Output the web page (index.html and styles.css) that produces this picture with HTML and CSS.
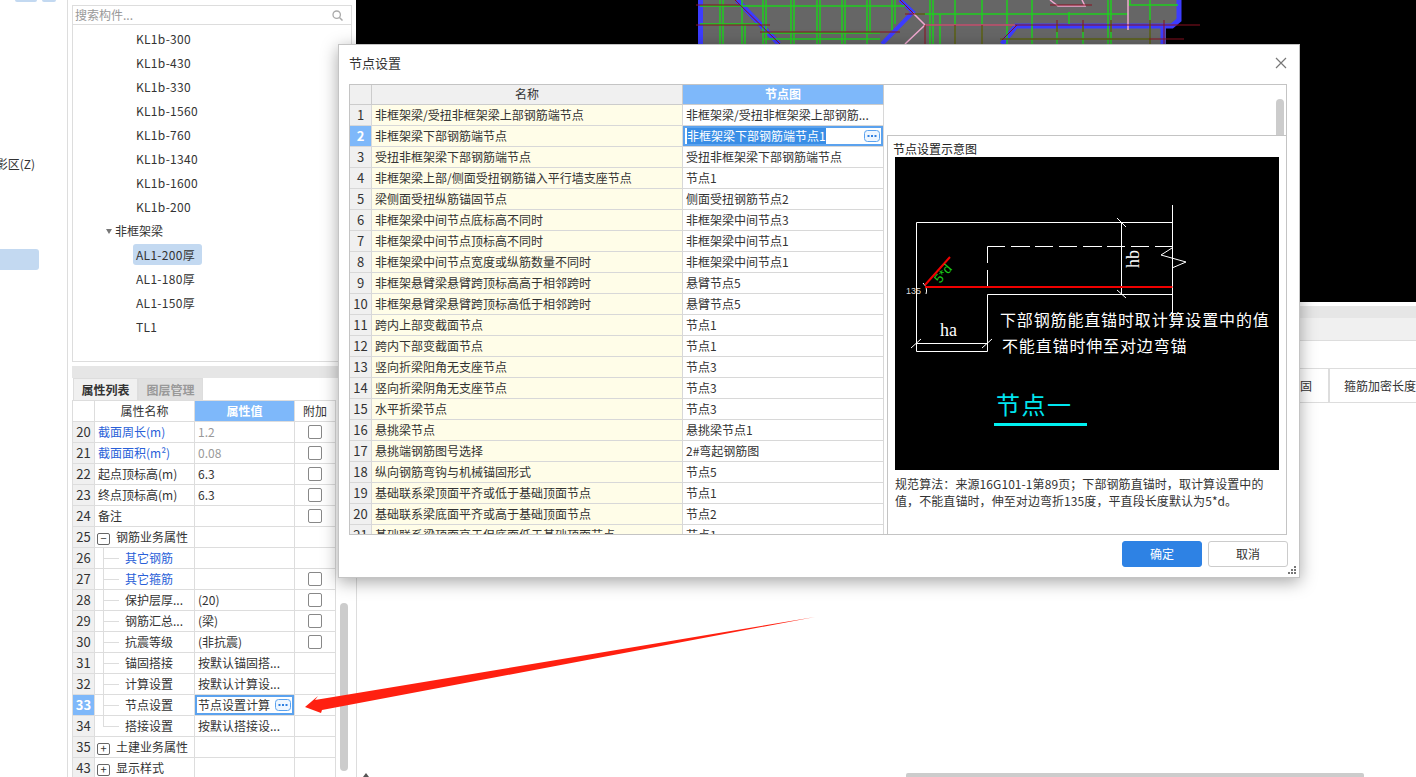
FILE: index.html
```html
<!DOCTYPE html>
<html lang="zh-CN">
<head>
    <meta charset="UTF-8">
    <title>节点设置</title>
    <link rel="stylesheet" href="styles.css">
</head>
<body>
    <div class="left-pane">
        <div class="top-btns"><span class="top-btn btn-a"></span><span class="top-btn btn-b"></span></div>
        <div class="left-item">阴影区(Z)</div>
        <div class="left-active"></div>
    </div>

    <div class="mid-panel">
        <div class="tree-box">
            <div class="search-row">
                <span>搜索构件...</span>
                <svg class="search-icon" width="11" height="11" viewBox="0 0 11 11"><circle cx="4.7" cy="4.7" r="3.7" fill="none" stroke="#aaa" stroke-width="1.3"/><path d="M7.5 7.5L10.5 10.5" stroke="#aaa" stroke-width="1.5"/></svg>
            </div>
            <ul class="tree">
                <li class="leaf">KL1b-300</li>
                <li class="leaf">KL1b-430</li>
                <li class="leaf">KL1b-330</li>
                <li class="leaf">KL1b-1560</li>
                <li class="leaf">KL1b-760</li>
                <li class="leaf">KL1b-1340</li>
                <li class="leaf">KL1b-1600</li>
                <li class="leaf">KL1b-200</li>
                <li class="group"><span class="caret"></span>非框架梁</li>
                <li class="leaf"><span class="picked">AL1-200厚</span></li>
                <li class="leaf">AL1-180厚</li>
                <li class="leaf">AL1-150厚</li>
                <li class="leaf">TL1</li>
            </ul>
        </div>
        <div class="split-bar"></div>
        <div class="tabs">
            <div class="tab tab-on">属性列表</div>
            <div class="tab">图层管理</div>
        </div>
        <div class="props-wrap">
            <table class="props">
                <colgroup><col class="c-num"><col class="c-name"><col class="c-val"><col class="c-add"></colgroup>
                <thead>
                    <tr><th class="num"></th><th>属性名称</th><th class="head-on">属性值</th><th>附加</th></tr>
                </thead>
                <tbody>
                    <tr><td class="num">20</td><td class="blue">截面周长(m)</td><td class="muted">1.2</td><td class="add"><span class="check"></span></td></tr>
                    <tr><td class="num">21</td><td class="blue">截面面积(m²)</td><td class="muted">0.08</td><td class="add"><span class="check"></span></td></tr>
                    <tr><td class="num">22</td><td>起点顶标高(m)</td><td>6.3</td><td class="add"><span class="check"></span></td></tr>
                    <tr><td class="num">23</td><td>终点顶标高(m)</td><td>6.3</td><td class="add"><span class="check"></span></td></tr>
                    <tr><td class="num">24</td><td>备注</td><td></td><td class="add"><span class="check"></span></td></tr>
                    <tr><td class="num">25</td><td class="grp"><span class="expander">−</span>钢筋业务属性</td><td></td><td></td></tr>
                    <tr><td class="num">26</td><td class="sub blue">其它钢筋</td><td></td><td></td></tr>
                    <tr><td class="num">27</td><td class="sub blue">其它箍筋</td><td></td><td class="add"><span class="check"></span></td></tr>
                    <tr><td class="num">28</td><td class="sub">保护层厚...</td><td>(20)</td><td class="add"><span class="check"></span></td></tr>
                    <tr><td class="num">29</td><td class="sub">钢筋汇总...</td><td>(梁)</td><td class="add"><span class="check"></span></td></tr>
                    <tr><td class="num">30</td><td class="sub">抗震等级</td><td>(非抗震)</td><td class="add"><span class="check"></span></td></tr>
                    <tr><td class="num">31</td><td class="sub">锚固搭接</td><td>按默认锚固搭...</td><td></td></tr>
                    <tr><td class="num">32</td><td class="sub">计算设置</td><td>按默认计算设...</td><td></td></tr>
                    <tr><td class="num num-on">33</td><td class="sub">节点设置</td><td class="editing"><div class="edit-box"><span>节点设置计算</span><svg class="more" width="16" height="12" viewBox="0 0 16 12"><rect x=".5" y=".5" width="15" height="11" rx="3" fill="#eef6ff" stroke="#5ba2ee"/><path d="M3.5 5h2v2h-2zM7 5h2v2H7zM10.500 5h2v2h-2z" fill="#2e7fe0"/></svg></div></td><td></td></tr>
                    <tr><td class="num">34</td><td class="sub sub-end">搭接设置</td><td>按默认搭接设...</td><td></td></tr>
                    <tr><td class="num">35</td><td class="grp"><span class="expander">+</span>土建业务属性</td><td></td><td></td></tr>
                    <tr><td class="num">43</td><td class="grp"><span class="expander">+</span>显示样式</td><td></td><td></td></tr>
                </tbody>
            </table>
            <div class="props-scroll"></div>
        </div>
    </div>

    <div class="work-area">
        <svg class="canvas" width="1060" height="302" viewBox="356 0 1060 302">
            <rect x="356" y="0" width="1060" height="302" fill="#000"/>
            <path d="M700 0H1180V22L1166 28V44H700Z" fill="#666"/>
            <g fill="none" stroke="#3c3cff" stroke-width="5">
                <path d="M700.500 0V44"/>
                <path d="M737 0L779 44"/>
                <path d="M882 44L913 12L900 0" stroke-width="4"/>
                <path d="M1002 44L1016 26H1172L1179 20V0"/>
                <path d="M1163 44V28"/>
            </g>
            <g fill="none" stroke="#1fce1f" stroke-width="1.5">
                <path d="M700 6H905M700 24H760M763 33H880M763 39H880M915 14H1128M1128 5H1178M1000 39H1150M940 14V44"/>
                <path d="M720 0V44M723 0V44M742 0V44M745 24V44M763 0V44M766 0V44M791 0V44M794 0V44M817 0V44M820 0V44M842 0V44M845 0V44M867 0V44M870 0V34M892 0V30M895 0V24"/>
                <path d="M930 0V44M933 0V44M955 0V44M982 0V44M1007 0V44M1032 0V44M1057 24V44M1069 12V24M1083 24V44M1108 0V44M1111 0V44M1130 0V5M1150 0V44"/>
            </g>
            <g fill="none" stroke="#f0a8d0" stroke-width="1.5">
                <path d="M913 13L925 25L905 44M925 25H1015M1128 0V30M1050 0L1058 6H1085L1082 0"/>
            </g>
            <g fill="none" stroke="#8a1020" stroke-width="1">
                <path d="M696 25H770M696 5H740M735 0L780 44M760 32H900M900 0L914 14M905 14H925M925 25H1200M1017 25L1002 40M925 25V44M955 25V44M982 25V44M1057 20V32M1083 20V32M1111 20V32M1150 20V44M1164 20V44M1050 5H1092M1000 39H1184"/>
            </g>
        </svg>
        <div class="sheet">
            <div class="sheet-bar"></div>
            <div class="sheet-head"></div>
            <div class="sheet-row"></div>
            <div class="sheet-row sheet-cells">
                <div class="cell-a">锚固</div>
                <div class="cell-b">箍筋加密长度</div>
            </div>
            <div class="sheet-fill"></div>
            <div class="h-scroll"><span class="h-arrow"></span><span class="h-thumb"></span></div>
        </div>
    </div>

    <div class="dialog">
        <div class="dialog-title">
            <span>节点设置</span>
            <svg width="12" height="12" viewBox="0 0 12 12"><path d="M1 1L11 11M11 1L1 11" stroke="#777" stroke-width="1.2" fill="none"/></svg>
        </div>
        <div class="dialog-body">
            <table class="nodes">
                <colgroup><col class="n-num"><col class="n-name"><col class="n-val"></colgroup>
                <thead>
                    <tr><th class="num"></th><th>名称</th><th class="head-on">节点图</th></tr>
                </thead>
                <tbody>
                    <tr><td class="num">1</td><td class="nm">非框架梁/受扭非框架梁上部钢筋端节点</td><td>非框架梁/受扭非框架梁上部钢筋...</td></tr>
                    <tr><td class="num num-on">2</td><td class="nm">非框架梁下部钢筋端节点</td><td class="editing"><div class="edit-box"><span class="selected">非框架梁下部钢筋端节点1</span><svg class="more" width="16" height="12" viewBox="0 0 16 12"><rect x=".5" y=".5" width="15" height="11" rx="3" fill="#eef6ff" stroke="#5ba2ee"/><path d="M3.500 5h2v2h-2zM7 5h2v2H7zM10.500 5h2v2h-2z" fill="#2e7fe0"/></svg></div></td></tr>
                    <tr><td class="num">3</td><td class="nm">受扭非框架梁下部钢筋端节点</td><td>受扭非框架梁下部钢筋端节点</td></tr>
                    <tr><td class="num">4</td><td class="nm">非框架梁上部/侧面受扭钢筋锚入平行墙支座节点</td><td>节点1</td></tr>
                    <tr><td class="num">5</td><td class="nm">梁侧面受扭纵筋锚固节点</td><td>侧面受扭钢筋节点2</td></tr>
                    <tr><td class="num">6</td><td class="nm">非框架梁中间节点底标高不同时</td><td>非框架梁中间节点3</td></tr>
                    <tr><td class="num">7</td><td class="nm">非框架梁中间节点顶标高不同时</td><td>非框架梁中间节点1</td></tr>
                    <tr><td class="num">8</td><td class="nm">非框架梁中间节点宽度或纵筋数量不同时</td><td>非框架梁中间节点1</td></tr>
                    <tr><td class="num">9</td><td class="nm">非框架悬臂梁悬臂跨顶标高高于相邻跨时</td><td>悬臂节点5</td></tr>
                    <tr><td class="num">10</td><td class="nm">非框架悬臂梁悬臂跨顶标高低于相邻跨时</td><td>悬臂节点5</td></tr>
                    <tr><td class="num">11</td><td class="nm">跨内上部变截面节点</td><td>节点1</td></tr>
                    <tr><td class="num">12</td><td class="nm">跨内下部变截面节点</td><td>节点1</td></tr>
                    <tr><td class="num">13</td><td class="nm">竖向折梁阳角无支座节点</td><td>节点3</td></tr>
                    <tr><td class="num">14</td><td class="nm">竖向折梁阴角无支座节点</td><td>节点3</td></tr>
                    <tr><td class="num">15</td><td class="nm">水平折梁节点</td><td>节点3</td></tr>
                    <tr><td class="num">16</td><td class="nm">悬挑梁节点</td><td>悬挑梁节点1</td></tr>
                    <tr><td class="num">17</td><td class="nm">悬挑端钢筋图号选择</td><td>2#弯起钢筋图</td></tr>
                    <tr><td class="num">18</td><td class="nm">纵向钢筋弯钩与机械锚固形式</td><td>节点5</td></tr>
                    <tr><td class="num">19</td><td class="nm">基础联系梁顶面平齐或低于基础顶面节点</td><td>节点1</td></tr>
                    <tr><td class="num">20</td><td class="nm">基础联系梁底面平齐或高于基础顶面节点</td><td>节点2</td></tr>
                    <tr><td class="num">21</td><td class="nm">基础联系梁顶面高于但底面低于基础顶面节点</td><td>节点1</td></tr>
                </tbody>
            </table>
            <div class="preview-side">
                <div class="side-thumb"></div>
                <div class="preview">
                    <div class="preview-title">节点设置示意图</div>
                    <svg class="sketch" width="384" height="313" viewBox="895 157 384 313">
                        <rect x="895" y="157" width="384" height="313" fill="#000"/>
                        <g fill="none" stroke="#fff" stroke-width="1">
                            <path d="M916.500 351.500V222.500H1172.500M1172.500 205V318M916.500 343.500H987.500M916.500 351.500H987.500V294.500H1172.500"/>
                            <path d="M987.500 246.500H1005M1011 246.500H1030M1035 246.500H1053M1059 246.500H1077M1083 246.500H1102M1107 246.500H1125M1131 246.500H1149M1155 246.500H1172M987.500 246.500V263M987.500 270V287"/>
                            <path d="M1121.500 222V294M1117 218L1126 227M1117 290L1126 298M911 348L921 339M982 348L992 339"/>
                            <path d="M1172 248L1161 255L1186 262L1172 268"/>
                            <path d="M923 283Q928 288 926 294"/>
                        </g>
                        <path d="M925 287H1172.500M925 285L950 257" fill="none" stroke="#f00000" stroke-width="2"/>
                        <text class="cad-green" x="0" y="0" transform="translate(940 284) rotate(-50)">5*d</text>
                        <text class="cad-small" x="906" y="294">135</text>
                        <text class="cad-latin" x="0" y="0" transform="translate(1139 268) rotate(-90)">hb</text>
                        <text class="cad-latin" x="940" y="336">ha</text>
                        <text class="cad-cn" x="1000" y="326">下部钢筋能直锚时取计算设置中的值</text>
                        <text class="cad-cn" x="1002" y="352">不能直锚时伸至对边弯锚</text>
                        <text class="cad-title" x="996" y="414">节点一</text>
                        <rect x="994" y="423" width="93" height="3" fill="#00f0f0"/>
                    </svg>
                    <p class="preview-desc">规范算法：来源16G101-1第89页；下部钢筋直锚时，取计算设置中的<br>值，不能直锚时，伸至对边弯折135度，平直段长度默认为5*d。</p>
                </div>
            </div>
        </div>
        <div class="dialog-foot">
            <button class="btn btn-ok">确定</button>
            <button class="btn">取消</button>
        </div>
        <svg class="grip" width="9" height="9" viewBox="0 0 9 9"><path d="M6 0h2v2H6zM3 3h2v2H3zM6 3h2v2H6zM0 6h2v2H0zM3 6h2v2H3zM6 6h2v2H6z" fill="#777"/></svg>
    </div>

    <svg class="arrow" width="1416" height="777" viewBox="0 0 1416 777">
        <polygon points="305,707 318,696 315,700 815,617 322,710 321,713" fill="#ff2010"/>
    </svg>
</body>
</html>
```

FILE: styles.css
```css
* { box-sizing: border-box; }
html, body { height: 100%; }
body { margin: 0; width: 1416px; height: 777px; overflow: hidden; display: flex; position: relative; background: #fff; color: #333; font-family: "Noto Sans CJK SC", "Liberation Sans", sans-serif; font-size: 12px; }

/* left strip */
.left-pane { width: 68px; margin-right: 4px; border-right: 1px solid #ddd; flex: none; overflow: hidden; }
.top-btns { display: flex; height: 3px; padding-left: 15px; gap: 5px; }
.top-btn { height: 2px; background: #c3d9f1; border-radius: 0 0 3px 3px; }
.btn-a { width: 22px; }
.btn-b { width: 14px; }
.left-item { margin-top: 151px; height: 20px; line-height: 20px; width: 35px; display: flex; justify-content: flex-end; white-space: nowrap; }
.left-active { margin-top: 75px; width: 39px; height: 21px; background: #c3d9f1; border-radius: 0 3px 3px 0; }

/* component tree + properties */
.mid-panel { width: 280px; flex: none; display: flex; flex-direction: column; }
.mid-panel > * { flex: none; }
.tree-box { height: 357px; margin-top: 5px; border: 1px solid #ddd; }
.search-row { height: 19px; border-bottom: 1px solid #ddd; display: flex; align-items: center; justify-content: space-between; padding: 0 8px 0 2px; color: #999; line-height: 18px; }
.search-icon { flex: none; }
.tree { list-style: none; margin: 0; padding: 2px 0 0; }
.tree li { height: 24px; line-height: 24px; white-space: nowrap; }
.tree .leaf { padding-left: 63px; letter-spacing: .3px; }
.tree .group { padding-left: 33px; display: flex; align-items: center; }
.caret { width: 0; height: 0; border-left: 3.5px solid transparent; border-right: 3.5px solid transparent; border-top: 5px solid #777; margin-right: 3px; }
.picked { display: inline-block; background: #c3d9f1; height: 21px; line-height: 21px; padding: 0 7px 0 3px; margin-left: -3px; border-radius: 3px; }
.split-bar { height: 12px; margin-top: 4px; background: #e6e6e6; }
.tabs { height: 22px; display: flex; padding-left: 1px; }
.tab { width: 65px; height: 22px; line-height: 22px; text-align: center; background: #e0e0e0; color: #999; font-weight: bold; border: 1px solid #ddd; border-bottom: none; }
.tab-on { background: #f0f0f0; color: #333; }
.props-wrap { display: flex; }
.props { width: 263px; table-layout: fixed; border-collapse: collapse; border-left: 1px solid #ddd; align-self: flex-start; }
.c-num { width: 22px; }
.c-name { width: 100px; }
.c-val { width: 100px; }
.c-add { width: 41px; }
.props-scroll { width: 8px; height: 168px; margin: 203px 0 0 4px; background: #ccc; border-radius: 4px; flex: none; }

/* shared table cells */
.props th, .props td, .nodes th, .nodes td { height: 21px; padding: 0 3px; border: 1px solid #ddd; font-weight: normal; line-height: 20px; white-space: nowrap; overflow: hidden; }
.props th, .nodes th { text-align: center; }
.nodes th { background: #f0f0f0; border-color: #ccc; }
.props td.num, .props th.num, .nodes td.num, .nodes th.num { padding: 0; text-align: center; background: #f0f0f0; font-size: 13px; }
.props th.num { background: #fff; }
.props th.head-on, .nodes th.head-on { background: #7eb8fa; color: #fff; font-weight: bold; }
.props td.num-on, .nodes td.num-on { background: #7eb8fa; color: #fff; font-weight: bold; }
.blue { color: #2a5fd8; }
.muted { color: #999; }
.add { text-align: center; }
.check { display: inline-block; width: 14px; height: 14px; margin-top: 3px; border: 1px solid #888; border-radius: 2px; background: #fff; vertical-align: top; }
.grp { padding-left: 2px !important; }
.expander { display: inline-block; width: 13px; height: 12px; line-height: 9px; margin: 0 6px 0 0; border: 1px solid #666; border-radius: 2px; text-align: center; vertical-align: -1px; font-size: 11px; }
.props td.sub { padding-left: 30px; position: relative; }
.sub::before { content: ""; position: absolute; left: 8px; top: 0; bottom: 0; border-left: 1px solid #ddd; }
.sub::after { content: ""; position: absolute; left: 8px; top: 10px; width: 16px; border-top: 1px solid #ddd; }
.sub-end::before { bottom: 10px; }
.props td.editing, .nodes td.editing { padding: 0; }
.edit-box { height: 20px; border: 2px solid #5ba2ee; display: flex; align-items: center; justify-content: space-between; padding: 0 1px 0 1px; line-height: 16px; }
.nodes .edit-box { padding-left: 2px; }
.more { flex: none; display: block; }
.selected { background: #3a8ee6; color: #fff; }

/* canvas and lower sheet */
.work-area { margin-left: 4px; flex: 1; display: flex; flex-direction: column; }
.canvas { display: block; flex: none; }
.sheet { flex: 1; margin-top: 4px; border-left: 1px solid #ddd; display: flex; flex-direction: column; position: relative; }
.sheet-bar { height: 12px; background: #e6e6e6; }
.sheet-head { height: 23px; background: #f0f0f0; border-bottom: 1px solid #ddd; }
.sheet-row { height: 28px; border-bottom: 1px solid #ddd; }
.sheet-cells { height: 34px; display: flex; line-height: 33px; }
.cell-a { width: 973px; padding-right: 16px; border-right: 2px solid #ddd; text-align: right; }
.cell-b { padding-left: 14px; white-space: nowrap; }
.sheet-fill { flex: 1; }
.h-scroll { height: 4px; display: flex; position: relative; }
.h-arrow { width: 0; height: 0; margin: 0 0 0 6px; border-left: 3px solid transparent; border-right: 3px solid transparent; border-bottom: 4px solid #555; }
.h-thumb { width: 458px; height: 4px; margin-left: 537px; background: #ccc; border-radius: 2px 2px 0 0; }

/* dialog */
.dialog { position: absolute; left: 338px; top: 44px; width: 962px; height: 534px; background: #fff; border: 1px solid #c4c4c4; box-shadow: 0 4px 16px rgba(0,0,0,.35); padding: 0 10px; }
.dialog-title { height: 39px; display: flex; align-items: center; justify-content: space-between; padding: 0 2px 4px 0; font-size: 13px; color: #333; }
.dialog-body { width: 938px; height: 451px; border: 1px solid #c4c4c4; display: flex; overflow: hidden; }
.nodes { width: 534px; flex: none; table-layout: fixed; border-collapse: collapse; align-self: flex-start; margin: -2px 0 0 -1px; }
.n-num { width: 22px; }
.n-name { width: 311px; }
.n-val { width: 201px; }
.nodes td.nm { background: #fffde8; }
.nodes td { border-color: #d8d8d8; }
.preview-side { flex: 1; display: flex; flex-direction: column; min-width: 0; }
.side-thumb { width: 8px; height: 36px; margin: 14px 2px 0 auto; background: #ccc; border-radius: 4px 4px 0 0; flex: none; }
.preview { flex: 1; margin-left: 3px; border: 1px solid #c4c4c4; border-right: none; border-bottom: none; padding: 0 7px; background: #fff; }
.preview-title { height: 21px; line-height: 25px; font-size: 12px; color: #222; margin-left: -2px; }
.sketch { display: block; }
.cad-cn { font-size: 16px; letter-spacing: .85px; fill: #fff; }
.cad-title { font-size: 24px; letter-spacing: 1.5px; fill: #00e6f0; }
.cad-latin { font-family: "Liberation Serif", serif; font-size: 18px; fill: #fff; }
.cad-green { font-family: "Liberation Sans", sans-serif; font-size: 13px; fill: #19c819; }
.cad-small { font-family: "Liberation Sans", sans-serif; font-size: 9px; fill: #ddd; }
.preview-desc { margin: 5px 0 0; font-size: 12px; line-height: 17px; letter-spacing: .08px; color: #333; white-space: nowrap; }
.dialog-foot { display: flex; justify-content: flex-end; gap: 6px; padding: 6px 1px 0 0; }
.btn { width: 80px; height: 26px; padding: 0; border: 1px solid #ccc; border-radius: 3px; background: #fff; color: #333; font: inherit; line-height: 22px; }
.btn-ok { background: #2e82e4; border-color: #2e82e4; color: #fff; }
.grip { position: absolute; right: 2px; bottom: 2px; }

.arrow { position: absolute; left: 0; top: 0; pointer-events: none; }
```
